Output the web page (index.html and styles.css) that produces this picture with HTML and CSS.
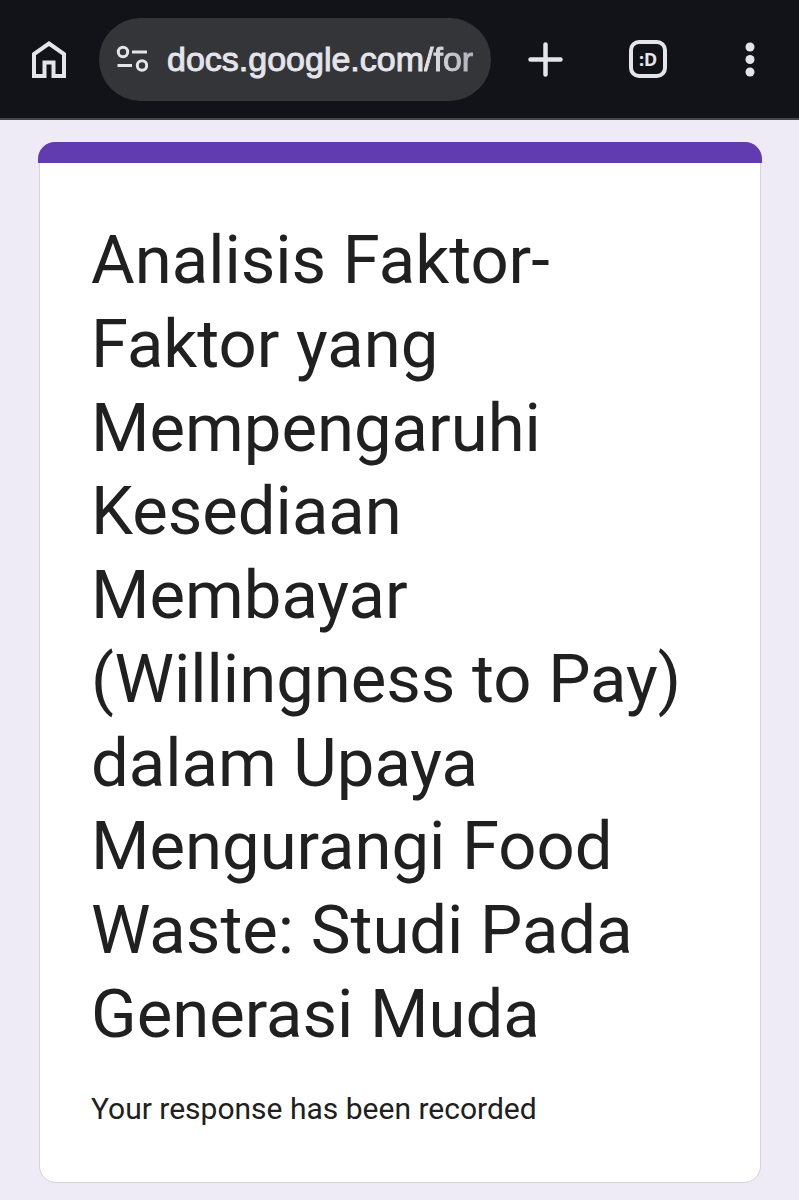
FILE: index.html
```
<!DOCTYPE html>
<html lang="id">
<head>
<meta charset="utf-8">
<meta name="viewport" content="width=device-width, initial-scale=1">
<title>Analisis Faktor-Faktor</title>
<link rel="stylesheet" href="styles.css">
</head>
<body>
<header class="toolbar">
  <button class="icon-button" type="button" aria-label="Home">
    <svg class="icon" viewBox="0 0 44 44" fill="none" stroke="currentColor" stroke-width="4"><path d="M7 39V17L22 6.500L37 17V39H26.500V25.500H17.500V39Z"/></svg>
  </button>
  <button class="address" type="button">
    <svg class="site-icon" viewBox="0 0 32 28" fill="none" stroke="currentColor" stroke-width="3"><circle cx="7" cy="7" r="4.700"/><path d="M16 7H31M1.500 20.500H16"/><circle cx="26" cy="20.500" r="4.700"/></svg>
    <span class="url">docs.google.com<span class="path">/for</span></span>
  </button>
  <nav class="actions">
    <button class="icon-button" type="button" aria-label="New tab">
      <svg class="icon" viewBox="0 0 44 44" fill="none" stroke="currentColor" stroke-width="4.500" stroke-linecap="round"><path d="M21.500 7.500V37.500M6.500 22.500H36.500"/></svg>
    </button>
    <button class="icon-button" type="button" aria-label="Tabs"><span class="tab-count">:D</span></button>
    <button class="icon-button" type="button" aria-label="Menu">
      <svg class="icon" viewBox="0 0 44 44" fill="currentColor"><circle cx="22" cy="10" r="4.500"/><circle cx="22" cy="22.500" r="4.500"/><circle cx="22" cy="35" r="4.500"/></svg>
    </button>
  </nav>
</header>
<main class="page">
  <article class="card">
    <h1 class="title">Analisis Faktor-Faktor yang Mempengaruhi Kesediaan Membayar (Willingness to Pay) dalam Upaya Mengurangi Food Waste: Studi Pada Generasi Muda</h1>
    <p class="message">Your response has been recorded</p>
  </article>
</main>
</body>
</html>
```
FILE: styles.css
```
* { box-sizing: border-box; }

body {
  margin: 0;
  background: #eeebf6;
  font-family: Roboto, sans-serif;
  color: #202020;
}

.toolbar {
  display: flex;
  align-items: center;
  height: 120px;
  padding: 0 25px 0 26px;
  background: #121318;
  border-bottom: 2px solid #45434f;
  color: #e4e4eb;
}

.icon-button {
  display: flex;
  align-items: center;
  justify-content: center;
  flex: none;
  width: 48px;
  height: 48px;
  padding: 0;
  border: 0;
  background: none;
  color: inherit;
}

.toolbar > .icon-button {
  width: 46px;
}

.icon {
  width: 44px;
  height: 44px;
}

.address {
  display: flex;
  align-items: center;
  gap: 19px;
  flex: 1;
  min-width: 0;
  height: 83px;
  margin-left: 27px;
  padding: 0 16px 0 17px;
  border: 0;
  border-radius: 42px;
  background: #343539;
  color: inherit;
  text-align: left;
}

.site-icon {
  flex: none;
  width: 32px;
  height: 28px;
}

.url {
  flex: 1;
  min-width: 0;
  overflow: hidden;
  white-space: nowrap;
  font: 400 34px/44px "Liberation Sans", Arial, sans-serif;
  -webkit-text-stroke: 1px #e4e4eb;
}

.path {
  background: linear-gradient(90deg, #e4e4eb, #b2b3bd);
  background-clip: text;
  color: transparent;
  -webkit-text-stroke-color: transparent;
}

.actions {
  display: flex;
  gap: 54px;
  margin-left: 31px;
}

.tab-count {
  width: 38px;
  height: 38px;
  border: 4px solid currentColor;
  border-radius: 10px;
  font: 700 18px/30px "Noto Sans", sans-serif;
  text-align: center;
}

.page {
  padding: 22px 37px 18px 38px;
}

.card {
  position: relative;
  margin: 0 1px;
  padding: 76px 51px 53px;
  border: 1px solid #d6d3de;
  border-radius: 17px;
  background: #fff;
}

.card::before {
  content: "";
  position: absolute;
  top: -1px;
  left: -2px;
  right: -2px;
  height: 21px;
  border-radius: 17px 17px 0 0;
  background: #613bb0;
}

.title {
  margin: 0;
  font-size: 67px;
  font-weight: 400;
  line-height: 1.25;
}

.message {
  margin: 32px 0 0;
  font-size: 30px;
  line-height: 40px;
}
```
